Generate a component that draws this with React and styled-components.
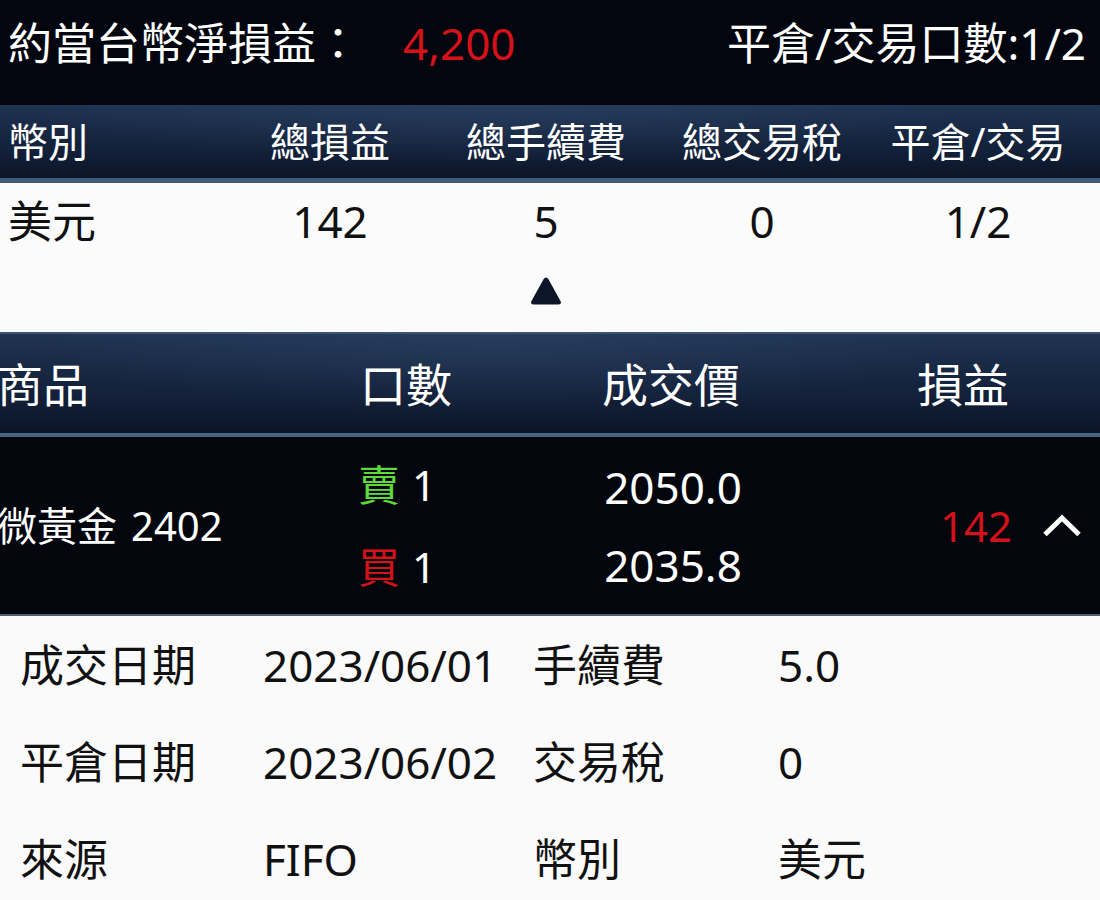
import styled, { createGlobalStyle } from "styled-components";

const GlobalStyle = createGlobalStyle`
  html, body {
    margin: 0;
    padding: 0;
    background: #fafafa;
  }
  body {
    font-family: "Noto Sans", "Noto Sans CJK TC", sans-serif;
    overflow: hidden;
  }
  * {
    box-sizing: border-box;
  }
`;

const RED = "#d3121a";
const GREEN = "#5ed93c";

const summary = { pnl: "4,200", closed: "1/2" };

const totals = [{ currency: "美元", pnl: "142", fee: "5", tax: "0", ratio: "1/2" }];

const trade = {
  name: "微黃金",
  month: "2402",
  legs: [
    { side: "賣", color: GREEN, qty: 1, price: "2050.0" },
    { side: "買", color: RED, qty: 1, price: "2035.8" },
  ],
  pnl: "142",
};

const details = [
  ["成交日期", "2023/06/01", "手續費", "5.0"],
  ["平倉日期", "2023/06/02", "交易稅", "0"],
  ["來源", "FIFO", "幣別", "美元"],
];

export default function App() {
  return (
    <Page>
      <GlobalStyle />
      <SummaryBar>
        <SummaryLeft>
          <span>約當台幣淨損益：</span>
          <Amount>{summary.pnl}</Amount>
        </SummaryLeft>
        <span>平倉/交易口數:{summary.closed}</span>
      </SummaryBar>

      <TotalsHeader>
        <Cell $left>幣別</Cell>
        <Cell>總損益</Cell>
        <Cell>總手續費</Cell>
        <Cell>總交易稅</Cell>
        <Cell>平倉/交易</Cell>
      </TotalsHeader>
      {totals.map((t) => (
        <TotalsRow key={t.currency}>
          <Cell $left>{t.currency}</Cell>
          <Cell>{t.pnl}</Cell>
          <Cell>{t.fee}</Cell>
          <Cell>{t.tax}</Cell>
          <Cell>{t.ratio}</Cell>
        </TotalsRow>
      ))}

      <ToggleRow>
        <svg width="34" height="30" viewBox="0 0 34 30">
          <path
            d="M14.4 3.5 Q17 -0.5 19.6 3.5 L31.5 25 Q33 28.5 29.5 28.5 L4.5 28.5 Q1 28.5 2.5 25 Z"
            fill="#0d1629"
          />
        </svg>
      </ToggleRow>

      <TradeHeader>
        <TradeCell $left>商品</TradeCell>
        <TradeCell>口數</TradeCell>
        <TradeCell>成交價</TradeCell>
        <TradeCell>損益</TradeCell>
      </TradeHeader>

      <TradeRow>
        <TradeName>
          <span>{trade.name}</span>
          <span>{trade.month}</span>
        </TradeName>
        <Legs>
          {trade.legs.map((l) => (
            <Leg key={l.side}>
              <Side $color={l.color}>{l.side}</Side>
              {l.qty}
            </Leg>
          ))}
        </Legs>
        <Prices>
          {trade.legs.map((l) => (
            <Leg key={l.side}>{l.price}</Leg>
          ))}
        </Prices>
        <PnlCell>
          <PnlValue>{trade.pnl}</PnlValue>
          <svg width="40" height="24" viewBox="0 0 40 24">
            <polyline
              points="3,20.5 20,4 37,20.5"
              fill="none"
              stroke="#fff"
              strokeWidth="5"
            />
          </svg>
        </PnlCell>
      </TradeRow>

      <Details>
        {details.map((d) => (
          <DetailRow key={d[0]}>
            {d.map((v, i) => (
              <span key={i}>{v}</span>
            ))}
          </DetailRow>
        ))}
      </Details>
    </Page>
  );
}

const Page = styled.div`
  width: 1100px;
  height: 900px;
  background: #fafafa;
  line-height: 1;
`;

const SummaryBar = styled.div`
  display: flex;
  align-items: center;
  justify-content: space-between;
  height: 105px;
  padding: 0 14px 19px 8px;
  background: #03060e;
  color: #fff;
  font-size: 44px;
`;

const SummaryLeft = styled.div`
  display: flex;
  align-items: center;
`;

const Amount = styled.span`
  margin-left: 43px;
  color: ${RED};
`;

const headerBg = `
  background:
    radial-gradient(ellipse 60% 120% at 45% 0%, rgba(70, 100, 140, 0.22), transparent 70%),
    linear-gradient(180deg, #1f3352 0%, #15243e 50%, #0b1528 100%);
`;

const TotalsHeader = styled.div`
  display: grid;
  grid-template-columns: repeat(5, 1fr);
  align-items: center;
  height: 78px;
  padding: 0 14px 0 6px;
  ${headerBg}
  border-bottom: 5px solid #425c77;
  color: #fff;
  font-size: 40px;
`;

const TotalsRow = styled.div`
  display: grid;
  grid-template-columns: repeat(5, 1fr);
  align-items: center;
  height: 75px;
  padding: 0 14px 0 6px;
  background: #fbfbfb;
  color: #111;
  font-size: 44px;
`;

const Cell = styled.div`
  text-align: ${(p) => (p.$left ? "left" : "center")};
  padding-left: ${(p) => (p.$left ? "2px" : "0")};
  white-space: nowrap;
`;

const ToggleRow = styled.div`
  display: flex;
  justify-content: center;
  align-items: flex-start;
  height: 74px;
  padding-top: 18px;
  padding-right: 8px;
  background: #fbfbfb;
`;

const tradeColumns = "300px 216px 314px 1fr";

const TradeHeader = styled.div`
  display: grid;
  grid-template-columns: ${tradeColumns};
  align-items: center;
  height: 105px;
  ${headerBg}
  border-top: 2px solid #3d5573;
  border-bottom: 4px solid #4a647f;
  color: #fff;
  font-size: 46px;
`;

const TradeCell = styled.div`
  text-align: ${(p) => (p.$left ? "left" : "center")};
  text-indent: ${(p) => (p.$left ? "-3px" : "0")};
  padding-right: ${(p) => (p.$left ? "0" : "4px")};
`;

const TradeRow = styled.div`
  display: grid;
  grid-template-columns: ${tradeColumns};
  align-items: center;
  height: 179px;
  background: #03060d;
  border-bottom: 2px solid #4a5f74;
  color: #fff;
`;

const TradeName = styled.div`
  display: flex;
  gap: 14px;
  margin-left: -3px;
  font-size: 40px;
  white-space: nowrap;
`;

const Legs = styled.div`
  display: flex;
  flex-direction: column;
  gap: 40px;
  padding-left: 58px;
  font-size: 42px;
`;

const Prices = styled(Legs)`
  padding-left: 0;
  align-items: center;
  gap: 36px;
  padding-right: 0;
  font-size: 44px;
`;

const Leg = styled.div`
  display: flex;
  align-items: center;
  gap: 12px;
  height: 42px;
`;

const Side = styled.span`
  color: ${(p) => p.$color};
`;

const PnlCell = styled.div`
  display: flex;
  align-items: center;
  justify-content: flex-end;
  gap: 30px;
  padding-right: 18px;
`;

const PnlValue = styled.span`
  color: ${RED};
  font-size: 42px;
`;

const Details = styled.div`
  background: #fafafa;
  color: #111;
  font-size: 44px;
`;

const DetailRow = styled.div`
  display: grid;
  grid-template-columns: 243px 270px 245px 1fr;
  align-items: center;
  height: 97px;
  padding-left: 20px;
  white-space: nowrap;
`;
